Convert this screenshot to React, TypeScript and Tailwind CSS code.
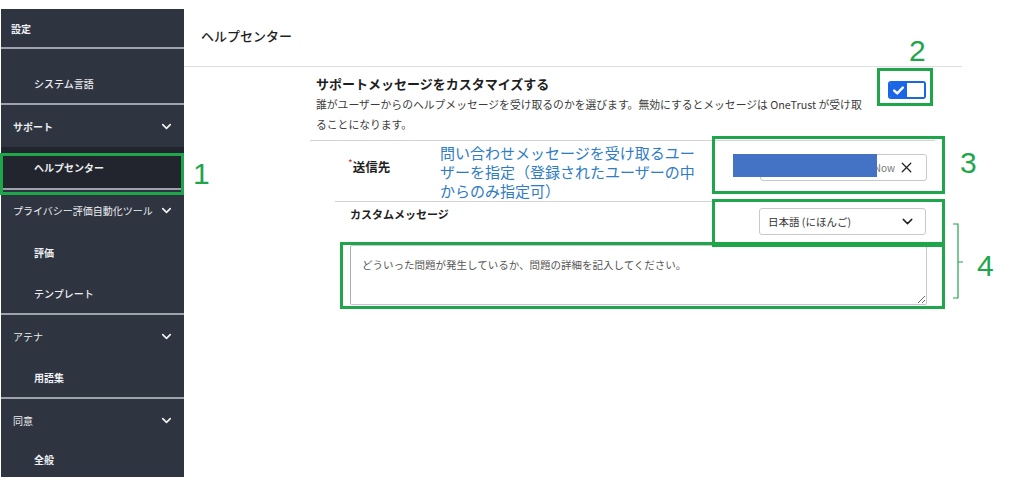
import React from "react";
import { ChevronDown, X } from "lucide-react";

const Sep = () => <div className="h-[2px] bg-[#9ea3ab]" />;

function Row({
  text,
  sub,
  bold,
  chevron,
  h,
  extra,
}: {
  text: string;
  sub?: boolean;
  bold?: boolean;
  chevron?: boolean;
  h: string;
  extra?: string;
}) {
  return (
    <div
      className={`flex items-center justify-between pr-[10px] ${h} ${sub ? "pl-[33px]" : "pl-[12px]"} ${extra ?? ""}`}
    >
      <span className={bold ? "font-bold" : sub ? "font-medium" : "font-normal"}>{text}</span>
      {chevron && <ChevronDown size={15} strokeWidth={2.6} className="text-[#f2f2f2]" />}
    </div>
  );
}

export default function App() {
  return (
    <div
      className="relative w-[1024px] h-[489px] bg-white overflow-hidden flex"
      style={{ fontFamily: '"Noto Sans CJK JP", "Noto Sans", sans-serif' }}
    >
      {/* Sidebar */}
      <aside className="mt-[9px] ml-[1px] w-[183px] h-[468px] bg-[#2e3440] text-[#eceef2] text-[10px] overflow-hidden shrink-0">
        <div className="h-[38px] flex items-center pl-[10px] font-bold">設定</div>
        <Sep />
        <div className="h-[54px] pt-[14px]">
          <Row text="システム言語" sub h="h-[40px]" />
        </div>
        <Sep />
        <Row text="サポート" bold chevron h="h-[42px]" />
        <Row text="ヘルプセンター" sub bold h="h-[41px]" extra="bg-[#22252d]" />
        <Sep />
        <Row text="プライバシー評価自動化ツール" chevron h="h-[41px]" />
        <Row text="評価" sub bold h="h-[42px]" />
        <Row text="テンプレート" sub h="h-[40px]" />
        <Sep />
        <Row text="アテナ" chevron h="h-[42px]" />
        <Row text="用語集" sub bold h="h-[40px]" />
        <Sep />
        <Row text="同意" chevron h="h-[42px]" />
        <Row text="全般" sub bold h="h-[36px]" />
      </aside>

      {/* Main */}
      <main className="flex-1 flex flex-col">
        <div className="h-[67px] mr-[62px] border-b border-[#dedede] flex items-center pl-[17px] pt-[5px]">
          <span className="text-[13px] font-medium text-[#1f1f1f]">ヘルプセンター</span>
        </div>

        <div className="ml-[126px] w-[625px] flex flex-col">
          {/* Top block */}
          <div className="flex items-start pl-[6px] pt-[8px] pb-[6px] border-b border-[#d3d3d3]">
            <div className="w-[556px]">
              <div className="text-[13px] leading-[18px] font-bold text-[#1e1e1e]">
                サポートメッセージをカスタマイズする
              </div>
              <div className="mt-[1px] text-[10.8px] leading-[20px] text-[#3c3c3c] whitespace-nowrap">
                <div>誰がユーザーからのヘルプメッセージを受け取るのかを選びます。無効にするとメッセージは OneTrust が受け取</div>
                <div>ることになります。</div>
              </div>
            </div>
            <div className="ml-[16px] mt-[6px] w-[38px] h-[18px] rounded-[3px] border-2 border-[#1b66e6] flex overflow-hidden">
              <div className="w-[17px] h-full bg-[#1b66e6] flex items-center justify-center">
                <svg width="11" height="9" viewBox="0 0 11 9">
                  <path d="M1.2 4.6 L4.2 7.4 L9.8 1.6" stroke="white" strokeWidth="2.4" fill="none" strokeLinecap="round" strokeLinejoin="round" />
                </svg>
              </div>
              <div className="flex-1 bg-white" />
            </div>
          </div>

          {/* 送信先 row */}
          <div className="ml-[25px] w-[600px] h-[61px] border-b border-[#d3d3d3] flex items-start pl-[13px]">
            <div className="w-[92px] mt-[17px] flex items-start">
              <span className="text-[10px] text-[#c2342f] leading-[10px]">*</span>
              <span className="text-[12.5px] font-bold text-[#1e1e1e] leading-[17px]">送信先</span>
            </div>
            <div className="mt-[2px] text-[15px] leading-[19px] text-[#2e7cc4] whitespace-nowrap">
              <div>問い合わせメッセージを受け取るユー</div>
              <div>ザーを指定（登録されたユーザーの中</div>
              <div>からのみ指定可）</div>
            </div>
            <div className="ml-auto mr-[8px] mt-[13px] relative w-[167px] h-[27px] rounded-[3px] border border-[#c6c9cf] bg-white flex items-center justify-end pr-[11px] gap-[3px]">
              <span className="text-[10px] text-[#777]">Now</span>
              <X size={17} strokeWidth={1.8} className="text-[#222]" />
              <div className="absolute left-[-28px] top-[-1px] w-[144px] h-[23px] bg-[#4472c4]" />
            </div>
          </div>

          {/* カスタムメッセージ row */}
          <div className="ml-[25px] w-[600px] pl-[15px] flex flex-col">
            <div className="flex items-start">
              <span className="mt-[5px] text-[11px] leading-[15px] font-semibold text-[#1e1e1e]">カスタムメッセージ</span>
              <div className="ml-auto mr-[9px] mt-[6px] w-[167px] h-[27px] rounded-[3px] border border-[#c6c9cf] flex items-center justify-between pl-[8px] pr-[9px]">
                <span className="text-[10.5px] text-[#333]">日本語 (にほんご)</span>
                <ChevronDown size={17} strokeWidth={2} className="text-[#222]" />
              </div>
            </div>
            <textarea
              readOnly
              defaultValue="どういった問題が発生しているか、問題の詳細を記入してください。"
              className="mt-[10px] w-[577px] h-[60px] border border-[#c4c7cc] border-l-[#a9adb3] rounded-[2px] px-[11px] pt-[11px] text-[10.5px] leading-[16px] text-[#555] resize-y outline-none"
            />
          </div>
        </div>
      </main>

      {/* Annotation overlays */}
      <div className="absolute left-0 top-[153px] w-[184px] h-[42px] border-[3px] border-[#1fa64b]" />
      <div className="absolute left-[193px] top-[156px] text-[30px] leading-[36px] text-[#1fa64b]" style={{ fontFamily: '"Liberation Sans", sans-serif' }}>1</div>

      <div className="absolute left-[877px] top-[68px] w-[56px] h-[38px] border-[3px] border-[#1fa64b]" />
      <div className="absolute left-[909px] top-[33px] text-[30px] leading-[36px] text-[#1fa64b]" style={{ fontFamily: '"Liberation Sans", sans-serif' }}>2</div>

      <div className="absolute left-[712px] top-[136px] w-[233px] h-[58px] border-[3px] border-[#1fa64b]" />
      <div className="absolute left-[960px] top-[145px] text-[30px] leading-[36px] text-[#1fa64b]" style={{ fontFamily: '"Liberation Sans", sans-serif' }}>3</div>

      <div className="absolute left-[712px] top-[199px] w-[233px] h-[48px] border-[3px] border-[#1fa64b]" />
      <div className="absolute left-[340px] top-[242px] w-[605px] h-[67px] border-[3px] border-[#1fa64b]" />

      <svg className="absolute left-[950px] top-[222px]" width="16" height="80" viewBox="0 0 16 80">
        <path d="M3 2 H8 V76 H3 M8 40 H13" stroke="#1fa64b" strokeWidth="1.2" fill="none" />
      </svg>
      <div className="absolute left-[977px] top-[248px] text-[30px] leading-[36px] text-[#1fa64b]" style={{ fontFamily: '"Liberation Sans", sans-serif' }}>4</div>
    </div>
  );
}
